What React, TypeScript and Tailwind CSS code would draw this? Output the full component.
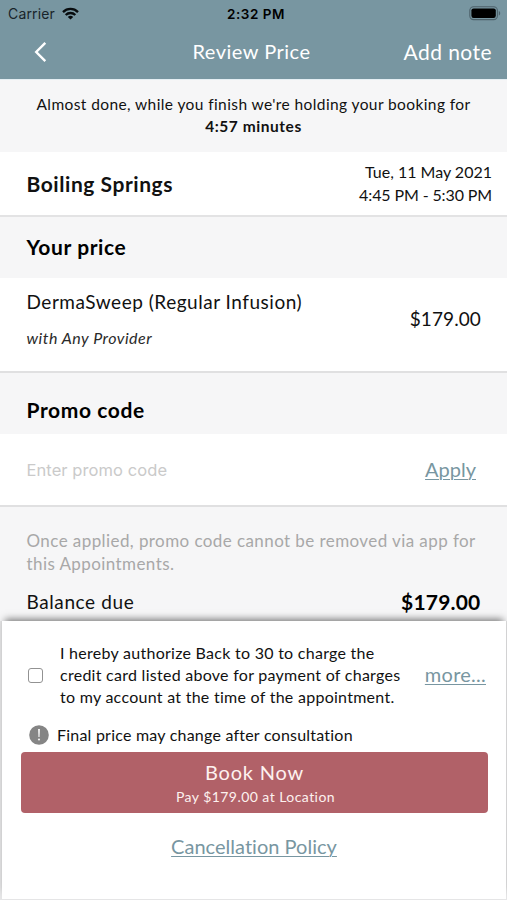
import type { ReactNode } from "react";

function SectionTitle({ children, className }: { children: ReactNode; className: string }) {
  return (
    <div className={`flex shrink-0 items-center bg-[#f6f6f7] px-[26.5px] ${className}`}>
      <h2 className="text-[21px] leading-6 font-bold text-black">{children}</h2>
    </div>
  );
}

function StatusBar() {
  return (
    <div className="grid h-[27px] grid-cols-3 items-center pr-[6px] pl-[8px] font-['Inter',sans-serif] text-black">
      <div className="flex items-center gap-[7px]">
        <span className="text-[14px] leading-4 tracking-[0.15px] text-[#18242a]">Carrier</span>
        <svg width="17" height="13" viewBox="0 0 17 13" fill="none" stroke="#080c0e" strokeWidth="2.3">
          <path d="M1 5.1C5.2 .9 11.8 .9 16 5.1" />
          <path d="M3.7 8C6.4 5.3 10.6 5.3 13.3 8" />
          <path d="M8.5 12.6 5.8 9.9C7.3 8.5 9.7 8.5 11.2 9.9Z" fill="#080c0e" stroke="none" />
        </svg>
      </div>
      <span className="pl-[3px] text-center text-[13.5px] leading-4 font-semibold tracking-[0.5px]">2:32 PM</span>
      <svg className="justify-self-end" width="32" height="15" viewBox="0 0 32 15">
        <rect x=".8" y=".8" width="27.6" height="12.8" rx="3.8" fill="none" stroke="#4d626b" strokeWidth="1.1" />
        <rect x="2.4" y="2.4" width="24.4" height="9.6" rx="2.2" fill="#000" />
        <path d="M29.8 5v4.6c1.9-.6 1.9-4 0-4.6Z" fill="#4d626b" />
      </svg>
    </div>
  );
}

export default function App() {
  return (
    <div className="flex h-[900px] w-[507px] flex-col overflow-hidden bg-white font-['Lato',sans-serif] text-[#111]">
      <header className="h-[79px] shrink-0 bg-[#7896a1] text-white">
        <StatusBar />
        <div className="grid h-[50px] grid-cols-[1fr_auto_1fr] items-center pr-[15px] pl-[33px]">
          <svg width="15" height="22" viewBox="0 0 15 22" fill="none" stroke="white" strokeWidth="2.4">
            <path d="M12.3 1.8 3.2 11l9.1 9.2" />
          </svg>
          <h1 className="-mt-[2px] -ml-[22px] text-[20px] leading-6 tracking-[0.5px]">Review Price</h1>
          <span className="-mt-px justify-self-end text-[21px] leading-6 tracking-[0.45px]">Add note</span>
        </div>
      </header>

      <div className="h-[73px] shrink-0 border-t border-[#e4eef3] bg-[#f6f6f7] pt-[13px] text-center text-[15.5px] leading-[22px]">
        <p className="tracking-[0.4px]">Almost done, while you finish we're holding your booking for</p>
        <p className="font-bold tracking-[0.55px]">4:57 minutes</p>
      </div>

      <div className="flex h-[65px] shrink-0 items-center justify-between border-b-2 border-[#e3e3e4] pr-[15px] pl-[26.5px]">
        <h2 className="text-[21px] leading-6 font-bold tracking-[0.55px]">Boiling Springs</h2>
        <div className="-mt-[2px] text-right text-[16px] leading-[23px]">
          <p>Tue, 11 May 2021</p>
          <p className="tracking-[-0.12px]">4:45 PM - 5:30 PM</p>
        </div>
      </div>

      <SectionTitle className="h-[61px] pb-px tracking-[0.6px]">Your price</SectionTitle>

      <div className="flex h-[95px] shrink-0 items-center justify-between border-b-2 border-[#e0e0e1] pr-[26px] pl-[26.5px]">
        <div className="-mt-[10px]">
          <p className="text-[19px] leading-6 tracking-[0.52px]">DermaSweep (Regular Infusion)</p>
          <p className="mt-[12px] text-[16px] leading-6 tracking-[0.5px] text-[#2a2a2a] italic">with Any Provider</p>
        </div>
        <span className="-mt-[11px] text-[19px] leading-6 tracking-[0.1px]">$179.00</span>
      </div>

      <SectionTitle className="h-[61px] pt-[12px] tracking-[0.6px]">Promo code</SectionTitle>

      <div className="flex h-[73px] shrink-0 items-center justify-between border-b-2 border-[#e0e0e1] pr-[31px] pl-[26.5px]">
        <span className="font-['Inter',sans-serif] text-[16.5px] leading-5 tracking-[0.08px] text-[#cacaca]">Enter promo code</span>
        <span className="-mt-[2px] text-[20px] leading-6 text-[#7896a1] underline decoration-1 underline-offset-2">Apply</span>
      </div>

      <div className="h-[114px] shrink-0 bg-[#f6f6f7] px-[26.5px] pt-[22px]">
        <p className="text-[17px] leading-[23px] tracking-[0.42px] text-[#a8a8a8]">
          Once applied, promo code cannot be removed via app for
          <br />
          this Appointments.
        </p>
        <div className="mt-[15px] flex justify-between text-[19px] leading-6">
          <span className="tracking-[0.6px]">Balance due</span>
          <strong className="text-[21px] font-bold tracking-[0.2px] text-black">$179.00</strong>
        </div>
      </div>

      <div className="h-[279px] shrink-0 bg-[#e6e6e7] pr-px pb-px pl-[2px]">
        <section className="flex h-[278px] flex-col bg-white pr-[18px] pl-[19px] shadow-[0_-5px_7px_-3px_rgba(0,0,0,0.5)]">
          <div className="flex items-center pt-[21px] pl-[7px]">
            <span className="size-[15px] shrink-0 rounded-[3px] border-[1.5px] border-[#929292]" />
            <p className="ml-[17px] grow text-[16px] leading-[22px] tracking-[0.27px]">
              I hereby authorize Back to 30 to charge the
              <br />
              credit card listed above for payment of charges
              <br />
              to my account at the time of the appointment.
            </p>
            <span className="-mt-[2px] mr-[2px] text-[20px] leading-6 tracking-[0.25px] text-[#7896a1] underline decoration-1 underline-offset-2">more...</span>
          </div>
          <div className="mt-[15px] flex h-[24px] items-center gap-[8px] pl-[8px]">
            <svg width="20" height="20" viewBox="0 0 20 20">
              <circle cx="10" cy="10" r="9.8" fill="#858585" />
              <path d="M9 4h2l-.4 8H9.4Z" fill="#eee" />
              <circle cx="10" cy="14.5" r="1.1" fill="#eee" />
            </svg>
            <span className="text-[16px] leading-5 tracking-[0.22px]">Final price may change after consultation</span>
          </div>
          <button className="mt-[5px] flex h-[61px] w-[467px] shrink-0 flex-col items-center rounded-[4px] bg-[#b16168] pt-[8px] text-[#fdf1ef]">
            <span className="text-[20px] leading-6 tracking-[0.8px]">Book Now</span>
            <span className="mt-[3px] pl-[2px] text-[14px] leading-5 tracking-[0.45px]">Pay $179.00 at Location</span>
          </button>
          <a className="mt-[21px] mr-[1px] self-center text-[20px] leading-6 tracking-[0.02px] text-[#7896a1] underline decoration-1 underline-offset-2">Cancellation Policy</a>
        </section>
      </div>
    </div>
  );
}
